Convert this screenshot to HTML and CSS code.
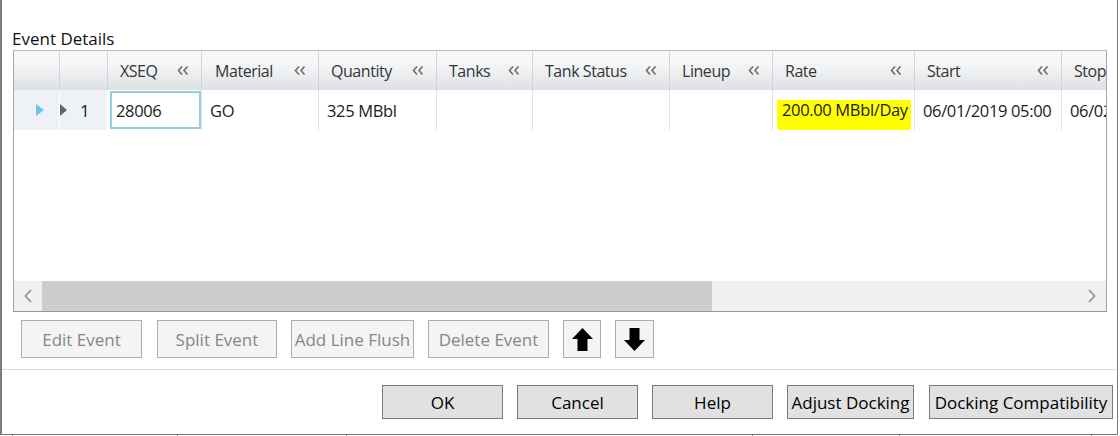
FILE: index.html
```html
<!DOCTYPE html>
<html>
<head>
<meta charset="utf-8">
<link rel="stylesheet" href="styles.css">
</head>
<body>
<div class="window">
  <div class="main">
    <div class="label">Event Details</div>
    <div class="grid">
      <div class="row header">
        <div class="cell"></div>
        <div class="cell"></div>
        <div class="cell hc"><span>XSEQ</span><svg class="chev" viewBox="0 0 12 9"><polyline points="5,0.5 1.5,4.5 5,8.5"/><polyline points="10.5,0.5 7,4.5 10.5,8.5"/></svg></div>
        <div class="cell hc m"><span>Material</span><svg class="chev" viewBox="0 0 12 9"><polyline points="5,0.5 1.5,4.5 5,8.5"/><polyline points="10.5,0.5 7,4.5 10.5,8.5"/></svg></div>
        <div class="cell hc"><span>Quantity</span><svg class="chev" viewBox="0 0 12 9"><polyline points="5,0.5 1.5,4.5 5,8.5"/><polyline points="10.5,0.5 7,4.5 10.5,8.5"/></svg></div>
        <div class="cell hc"><span>Tanks</span><svg class="chev" viewBox="0 0 12 9"><polyline points="5,0.5 1.5,4.5 5,8.5"/><polyline points="10.5,0.5 7,4.5 10.5,8.5"/></svg></div>
        <div class="cell hc"><span>Tank Status</span><svg class="chev" viewBox="0 0 12 9"><polyline points="5,0.5 1.5,4.5 5,8.5"/><polyline points="10.5,0.5 7,4.5 10.5,8.5"/></svg></div>
        <div class="cell hc"><span>Lineup</span><svg class="chev" viewBox="0 0 12 9"><polyline points="5,0.5 1.5,4.5 5,8.5"/><polyline points="10.5,0.5 7,4.5 10.5,8.5"/></svg></div>
        <div class="cell hc"><span>Rate</span><svg class="chev" viewBox="0 0 12 9"><polyline points="5,0.5 1.5,4.5 5,8.5"/><polyline points="10.5,0.5 7,4.5 10.5,8.5"/></svg></div>
        <div class="cell hc"><span>Start</span><svg class="chev" viewBox="0 0 12 9"><polyline points="5,0.5 1.5,4.5 5,8.5"/><polyline points="10.5,0.5 7,4.5 10.5,8.5"/></svg></div>
        <div class="cell hc last"><span>Stop</span></div>
      </div>
      <div class="row data">
        <div class="cell rh rh1"><svg class="cur" viewBox="0 0 8 12"><polygon points="0,0 8,6 0,12"/></svg></div>
        <div class="cell rh rh2"><svg class="exp" viewBox="0 0 7 12"><polygon points="0,0 7,6 0,12"/></svg><span class="num">1</span></div>
        <div class="cell dc focus">28006</div>
        <div class="cell dc">GO</div>
        <div class="cell dc">325 MBbl</div>
        <div class="cell dc"></div>
        <div class="cell dc"></div>
        <div class="cell dc"></div>
        <div class="cell dc rate"><span class="hl">200.00 MBbl/Day</span></div>
        <div class="cell dc">06/01/2019 05:00</div>
        <div class="cell dc last">06/02/2019 05:00</div>
      </div>
      <div class="filler"></div>
      <div class="hscroll">
        <div class="sbtn"><svg viewBox="0 0 8 14"><polyline points="7,1 1.5,7 7,13"/></svg></div>
        <div class="thumb"></div>
        <div class="track"></div>
        <div class="sbtn"><svg viewBox="0 0 8 14"><polyline points="1,1 6.5,7 1,13"/></svg></div>
      </div>
    </div>
    <div class="actions">
      <button class="abtn w121 first" disabled>Edit Event</button>
      <button class="abtn w120" disabled>Split Event</button>
      <button class="abtn w123" disabled>Add Line Flush</button>
      <button class="abtn w121" disabled>Delete Event</button>
      <button class="abtn arrow w38"><svg viewBox="0 0 21 23"><polygon points="10.5,0 21,11 15.5,11 15.5,23 5.5,23 5.5,11 0,11"/></svg></button>
      <button class="abtn arrow w39"><svg viewBox="0 0 21 23"><polygon points="5.5,0 15.5,0 15.5,12 21,12 10.5,23 0,12 5.5,12"/></svg></button>
    </div>
  </div>
  <div class="footer">
    <button class="fbtn w121">OK</button>
    <button class="fbtn w121">Cancel</button>
    <button class="fbtn w121">Help</button>
    <button class="fbtn w127">Adjust Docking</button>
    <button class="fbtn w184">Docking Compatibility</button>
  </div>
</div>
<div class="under">
  <span class="tick t1"></span><span class="tick t2"></span><span class="tick t3"></span><span class="tick t4"></span><span class="tick t5"></span><span class="tick t6"></span>
</div>
</body>
</html>
```

FILE: styles.css
```css
* { box-sizing: border-box; }
html, body { margin: 0; padding: 0; background: #ffffff; }
body {
  width: 1120px;
  height: 436px;
  overflow: hidden;
  font-family: "Open Sans", "Noto Sans", sans-serif;
  font-size: 16px;
  color: #1b1b1b;
}
.window {
  width: 1118px;
  height: 435px;
  border-left: 2px solid #7d7d7d;
  border-right: 1px solid #7d7d7d;
  border-bottom: 1px solid #767676;
  display: flex;
  flex-direction: column;
}
.main {
  height: 370px;
  border-bottom: 1px solid #dcdcdc;
  padding-top: 29px;
}
.label {
  height: 21px;
  line-height: 20px;
  padding-left: 10px;
  font-size: 17px;
  color: #111;
}
.grid {
  margin-left: 11px;
  width: 1094px;
  height: 262px;
  border: 1px solid #9aa5b0;
  border-top-color: #b3bac2;
  border-bottom-color: #8c98a4;
  display: flex;
  flex-direction: column;
  overflow: hidden;
}
.row {
  display: grid;
  grid-template-columns: 46px 48px 94px 117px 118px 96px 137px 103px 142px 147px 200px;
}
.header {
  height: 39px;
  font-size: 16px;
  letter-spacing: -0.45px;
  background: linear-gradient(#f7f8f9 0%, #f1f3f4 45%, #dde0e4 100%);
  color: #353535;
}
.cell {
  border-right: 1px solid #e1e3e6;
  display: flex;
  align-items: center;
  white-space: nowrap;
  overflow: hidden;
}
.header .cell { border-right: 1px solid #d0d4d9; }
.hc {
  justify-content: space-between;
  padding: 0 12px 0 12px;
}
.hc.m { padding-left: 13px; }
.chev {
  width: 12px;
  height: 9px;
  fill: none;
  stroke: #6f6f6f;
  stroke-width: 1.6;
  flex: none;
}
.data { height: 40px; font-size: 16.5px; letter-spacing: -0.35px; }
.rh { background: #eef1f5; }
.rh1 { border-right-color: #ffffff; padding-left: 22px; }
.rh2 { border-right-color: #ffffff; }
.cur { width: 8px; height: 12px; fill: #6fc4e6; }
.exp { width: 7px; height: 12px; fill: #5d6874; }
.num { margin-left: 13px; font-size: 17px; }
.dc { padding-left: 8px; }
.focus { position: relative; }
.focus::after {
  content: "";
  position: absolute;
  top: 1px; bottom: 1px; left: 2px; right: 0;
  border: 2px solid #92d0df;
}
.rate { padding-left: 4px; }
.hl {
  align-self: flex-end;
  background: #ffff00;
  line-height: 20px;
  padding: 0 3px 10px 5px;
  border-radius: 2px;
}
.filler { height: 151px; background: #fff; }
.hscroll {
  height: 30px;
  display: flex;
  background: #f0f0f0;
}
.sbtn {
  width: 28px;
  display: flex;
  align-items: center;
  justify-content: center;
}
.sbtn svg {
  width: 8px;
  height: 14px;
  fill: none;
  stroke: #a3a3a3;
  stroke-width: 2;
}
.thumb { width: 670px; background: #cdcdcd; }
.track { flex: 1; }
.actions {
  display: flex;
  gap: 14px;
  padding-left: 19px;
  margin-top: 8px;
}
.abtn {
  height: 38px;
  font-family: inherit;
  font-size: 17px;
  background: #f4f4f4;
  border: 1px solid #adadad;
  color: #868686;
  padding: 0;
  white-space: nowrap;
  display: flex;
  align-items: center;
  justify-content: center;
}
.abtn.first { margin-right: 1px; }
.arrow svg { width: 21px; height: 23px; fill: #000; }
.w38 { width: 38px; }
.w39 { width: 39px; }
.w120 { width: 120px; }
.w121 { width: 121px; }
.w123 { width: 123px; }
.w127 { width: 127px; }
.w184 { width: 184px; }
.footer {
  flex: 1;
  display: flex;
  justify-content: flex-end;
  align-items: flex-start;
  gap: 14px;
  padding: 15px 4px 0 0;
}
.fbtn {
  height: 34px;
  font-family: inherit;
  font-size: 17px;
  background: #e1e1e1;
  border: 1px solid #7a7a7a;
  color: #000;
  padding: 0;
  white-space: nowrap;
}
.fbtn.w184 { margin-left: 1px; }
.under {
  height: 1px;
  display: flex;
}
.tick { width: 1px; height: 1px; background: #8a8a8a; }
.t1 { margin-left: 12px; }
.t2 { margin-left: 164px; }
.t3 { margin-left: 168px; }
.t4 { margin-left: 405px; }
.t5 { margin-left: 146px; }
.t6 { margin-left: 191px; }
```
